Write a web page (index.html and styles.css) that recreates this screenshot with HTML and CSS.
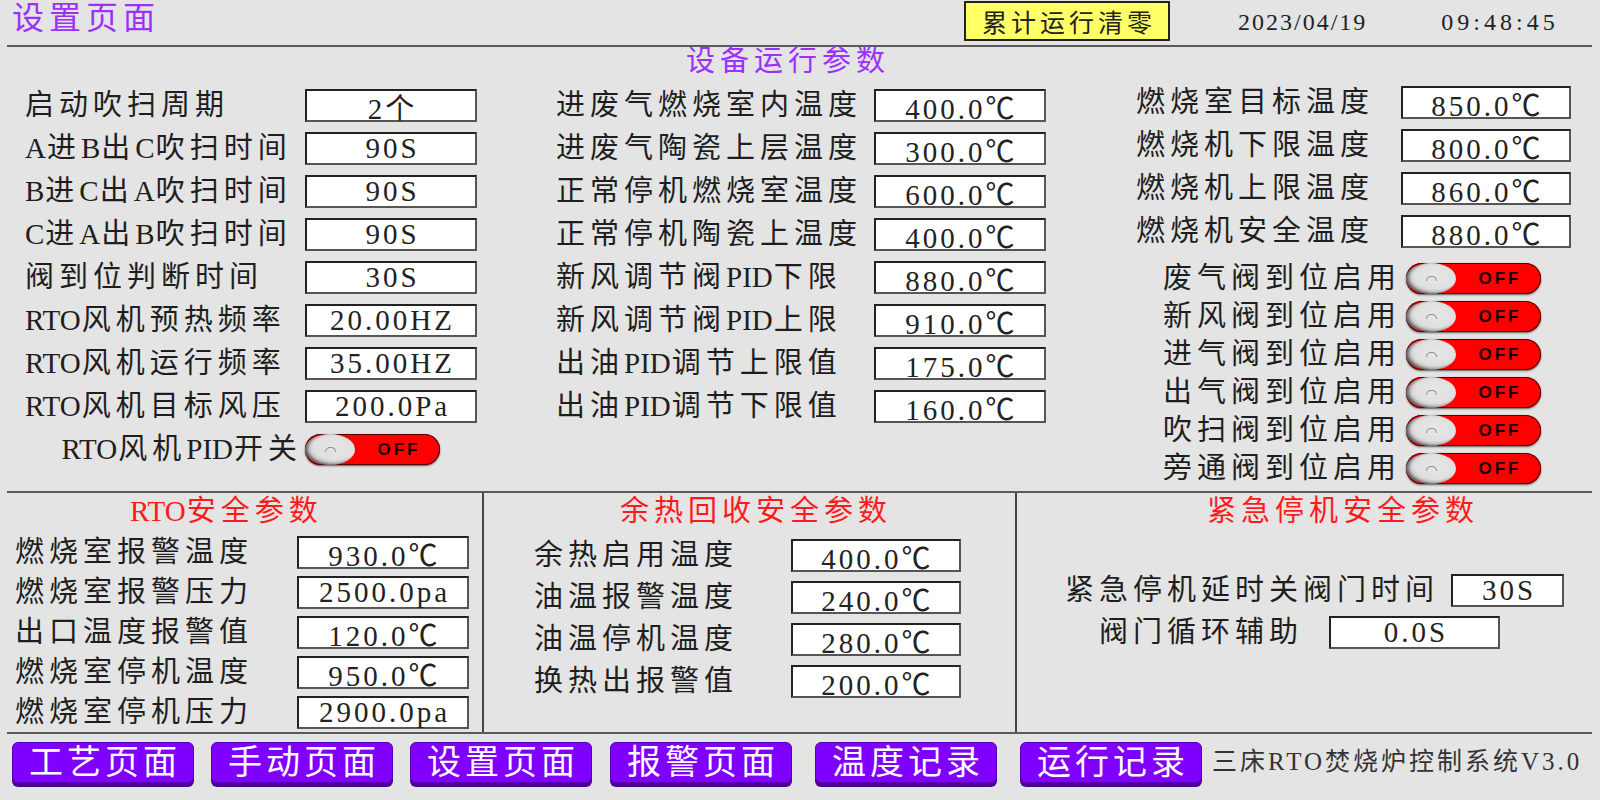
FILE: index.html
```html
<!DOCTYPE html>
<html lang="zh-CN">
<head>
    <meta charset="UTF-8">
    <meta name="viewport" content="width=device-width, initial-scale=1.0">
    <title>设置页面</title>
    <link rel="stylesheet" href="styles.css">
</head>
<body>
<div class="screen">
    <header class="top">
        <h1 class="title">设置页面</h1>
        <button class="clear-btn">累计运行清零</button>
        <span class="date">2023/04/19</span>
        <span class="time">09:48:45</span>
    </header>

    <section class="device">
        <h2 class="device-title">设备运行参数</h2>
        <div class="device-cols">
            <div class="col col-left">
                <div class="row"><span class="label">启动吹扫周期</span><span class="val">2个</span></div>
                <div class="row"><span class="label"><span class="en">A</span>进<span class="en">B</span>出<span class="en">C</span>吹扫时间</span><span class="val">90S</span></div>
                <div class="row"><span class="label"><span class="en">B</span>进<span class="en">C</span>出<span class="en">A</span>吹扫时间</span><span class="val">90S</span></div>
                <div class="row"><span class="label"><span class="en">C</span>进<span class="en">A</span>出<span class="en">B</span>吹扫时间</span><span class="val">90S</span></div>
                <div class="row"><span class="label">阀到位判断时间</span><span class="val">30S</span></div>
                <div class="row"><span class="label"><span class="en">RTO</span>风机预热频率</span><span class="val">20.00HZ</span></div>
                <div class="row"><span class="label"><span class="en">RTO</span>风机运行频率</span><span class="val">35.00HZ</span></div>
                <div class="row"><span class="label"><span class="en">RTO</span>风机目标风压</span><span class="val">200.0Pa</span></div>
                <div class="row sw-row">
                    <span class="label"><span class="en">RTO</span>风机<span class="en">PID</span>开关</span>
                    <div class="switch"><span class="knob"><i></i></span><span class="off">OFF</span></div>
                </div>
            </div>

            <div class="col col-mid">
                <div class="row"><span class="label">进废气燃烧室内温度</span><span class="val">400.0℃</span></div>
                <div class="row"><span class="label">进废气陶瓷上层温度</span><span class="val">300.0℃</span></div>
                <div class="row"><span class="label">正常停机燃烧室温度</span><span class="val">600.0℃</span></div>
                <div class="row"><span class="label">正常停机陶瓷上温度</span><span class="val">400.0℃</span></div>
                <div class="row"><span class="label">新风调节阀<span class="en">PID</span>下限</span><span class="val">880.0℃</span></div>
                <div class="row"><span class="label">新风调节阀<span class="en">PID</span>上限</span><span class="val">910.0℃</span></div>
                <div class="row"><span class="label">出油<span class="en">PID</span>调节上限值</span><span class="val">175.0℃</span></div>
                <div class="row"><span class="label">出油<span class="en">PID</span>调节下限值</span><span class="val">160.0℃</span></div>
            </div>

            <div class="col col-right">
                <div class="row"><span class="label">燃烧室目标温度</span><span class="val">850.0℃</span></div>
                <div class="row"><span class="label">燃烧机下限温度</span><span class="val">800.0℃</span></div>
                <div class="row"><span class="label">燃烧机上限温度</span><span class="val">860.0℃</span></div>
                <div class="row"><span class="label">燃烧机安全温度</span><span class="val">880.0℃</span></div>
                <div class="sw-list">
                    <div class="sw-item"><span class="label">废气阀到位启用</span><div class="switch"><span class="knob"><i></i></span><span class="off">OFF</span></div></div>
                    <div class="sw-item"><span class="label">新风阀到位启用</span><div class="switch"><span class="knob"><i></i></span><span class="off">OFF</span></div></div>
                    <div class="sw-item"><span class="label">进气阀到位启用</span><div class="switch"><span class="knob"><i></i></span><span class="off">OFF</span></div></div>
                    <div class="sw-item"><span class="label">出气阀到位启用</span><div class="switch"><span class="knob"><i></i></span><span class="off">OFF</span></div></div>
                    <div class="sw-item"><span class="label">吹扫阀到位启用</span><div class="switch"><span class="knob"><i></i></span><span class="off">OFF</span></div></div>
                    <div class="sw-item"><span class="label">旁通阀到位启用</span><div class="switch"><span class="knob"><i></i></span><span class="off">OFF</span></div></div>
                </div>
            </div>
        </div>
    </section>

    <section class="safety">
        <div class="safe safe-rto">
            <h3 class="safe-title"><span class="en">RTO</span>安全参数</h3>
            <div class="row"><span class="label">燃烧室报警温度</span><span class="val">930.0℃</span></div>
            <div class="row"><span class="label">燃烧室报警压力</span><span class="val">2500.0pa</span></div>
            <div class="row"><span class="label">出口温度报警值</span><span class="val">120.0℃</span></div>
            <div class="row"><span class="label">燃烧室停机温度</span><span class="val">950.0℃</span></div>
            <div class="row"><span class="label">燃烧室停机压力</span><span class="val">2900.0pa</span></div>
        </div>
        <div class="safe safe-heat">
            <h3 class="safe-title">余热回收安全参数</h3>
            <div class="row"><span class="label">余热启用温度</span><span class="val">400.0℃</span></div>
            <div class="row"><span class="label">油温报警温度</span><span class="val">240.0℃</span></div>
            <div class="row"><span class="label">油温停机温度</span><span class="val">280.0℃</span></div>
            <div class="row"><span class="label">换热出报警值</span><span class="val">200.0℃</span></div>
        </div>
        <div class="safe safe-stop">
            <h3 class="safe-title">紧急停机安全参数</h3>
            <div class="row stop-1"><span class="label">紧急停机延时关阀门时间</span><span class="val">30S</span></div>
            <div class="row stop-2"><span class="label">阀门循环辅助</span><span class="val">0.0S</span></div>
        </div>
    </section>

    <nav class="nav">
        <button class="nav-btn">工艺页面</button>
        <button class="nav-btn">手动页面</button>
        <button class="nav-btn">设置页面</button>
        <button class="nav-btn">报警页面</button>
        <button class="nav-btn">温度记录</button>
        <button class="nav-btn">运行记录</button>
        <span class="brand">三床RTO焚烧炉控制系统V3.0</span>
    </nav>
</div>
</body>
</html>
```

FILE: styles.css
```css
*{
    margin: 0;
    padding: 0;
    box-sizing: border-box;
}

body{
    width: 1600px;
    height: 800px;
    overflow: hidden;
    background-color: #e4e4e4;
    color: #1e1e1e;
    font-family: "Liberation Serif", "Noto Sans CJK SC", serif;
}

.screen{
    width: 1585px;
    margin-left: 7px;
}

/* latin letters sit tight, like the half-width HMI font */
.en{
    letter-spacing: 0;
    margin-right: 1px;
}

/* top bar */
.top{
    height: 47px;
    display: flex;
    align-items: flex-start;
    border-bottom: 2px solid #5a5a5a;
}

.title{
    margin-left: 5px;
    width: 148px;
    font-size: 32px;
    font-weight: normal;
    line-height: 37px;
    letter-spacing: 5px;
    white-space: nowrap;
    color: #9b30ff;
}

.clear-btn{
    margin-left: 804px;
    margin-top: 1px;
    width: 206px;
    height: 40px;
    background-color: #ffff66;
    border: 2px solid #222;
    font-family: inherit;
    font-size: 25px;
    letter-spacing: 4px;
    text-indent: 4px;
    color: #222;
}

.date{
    margin-left: 68px;
    font-size: 24px;
    line-height: 45px;
    letter-spacing: 2px;
    color: #222;
}

.time{
    margin-left: 74px;
    font-size: 24px;
    line-height: 45px;
    letter-spacing: 4px;
    color: #222;
}

/* shared rows */
.row{
    display: flex;
    align-items: center;
    height: 33px;
    margin-bottom: 10px;
}

.label{
    flex: none;
    font-size: 29px;
    letter-spacing: 5px;
    white-space: nowrap;
    line-height: 33px;
}

.val{
    flex: none;
    height: 33px;
    width: 172px;
    display: flex;
    align-items: center;
    justify-content: center;
    background-color: #fff;
    border: 2px solid #3c3c3c;
    border-color: #222 #555 #555 #222;
    font-size: 29px;
    letter-spacing: 3px;
    text-indent: 3px;
    white-space: nowrap;
    color: #222;
}

/* device parameters */
.device{
    height: 447px;
    border-bottom: 2px solid #5a5a5a;
}

.device-title{
    padding-left: 679px;
    height: 30px;
    margin-top: -1px;
    font-size: 29px;
    font-weight: normal;
    line-height: 30px;
    letter-spacing: 5px;
    color: #9b30ff;
}

.device-cols{
    display: flex;
    margin-top: 13px;
}

.col-left{
    width: 549px;
    padding-left: 18px;
}

.col-left .label{
    width: 280px;
}

.col-left .sw-row .label{
    text-align: right;
    padding-right: 3px;
}

.col-mid{
    width: 580px;
}

.col-mid .label{
    width: 318px;
}

.col-right{
    margin-top: -3px;
}

.col-right .label{
    width: 265px;
}

.col-right .val{
    width: 170px;
}

.sw-list{
    margin-top: 14px;
}

.sw-item{
    display: flex;
    align-items: center;
    height: 33px;
    margin-bottom: 5px;
}

.sw-item .label{
    width: 270px;
    padding-left: 27px;
}

/* toggle switch */
.switch{
    width: 135px;
    height: 31px;
    display: flex;
    align-items: center;
    border-radius: 16px;
    background-color: #ff0000;
    box-shadow: inset 0 0 0 1px #5a0000, 0 1px 2px rgba(0, 0, 0, 0.6);
}

.knob{
    width: 50px;
    height: 31px;
    display: flex;
    align-items: center;
    justify-content: center;
    border-radius: 50%;
    background: radial-gradient(ellipse at 60% 42%, #e6e6e6 0, #e0e0e0 50%, #c8c8c8 66%, #858585 84%, #3a3a3a 100%);
    box-shadow: inset 3px -1px 3px rgba(0, 0, 0, 0.45);
}

.knob i{
    width: 11px;
    height: 5px;
    border: 1px solid #8a8a8a;
    border-bottom: none;
    border-radius: 6px 6px 0 0;
}

.off{
    flex: 1;
    text-align: center;
    font-family: "Liberation Sans", sans-serif;
    font-weight: bold;
    font-size: 17px;
    letter-spacing: 3px;
    text-indent: 3px;
    color: #1a0000;
}

/* safety parameters */
.safety{
    height: 241px;
    display: flex;
    border-bottom: 2px solid #5a5a5a;
}

.safe{
    border-right: 2px solid #444;
}

.safe-title{
    height: 30px;
    margin-top: 3px;
    margin-bottom: 10px;
    font-size: 29px;
    font-weight: normal;
    line-height: 30px;
    letter-spacing: 5px;
    white-space: nowrap;
    color: #ff1a1a;
}

.safe-rto{
    width: 477px;
}

.safe-rto .safe-title{
    padding-left: 123px;
}

.safe-rto .row{
    margin-bottom: 7px;
}

.safe-rto .label{
    width: 290px;
    padding-left: 8px;
}

.safe-heat{
    width: 533px;
}

.safe-heat .safe-title{
    padding-left: 136px;
    margin-bottom: 13px;
}

.safe-heat .row{
    margin-bottom: 9px;
}

.safe-heat .label{
    width: 307px;
    padding-left: 50px;
}

.safe-heat .val{
    width: 170px;
}

.safe-stop{
    flex: 1;
    border-right: none;
}

.safe-stop .safe-title{
    padding-left: 190px;
    margin-bottom: 48px;
}

.safe-stop .label{
    text-align: right;
}

.stop-1{
    margin-bottom: 9px;
}

.stop-1 .label{
    width: 434px;
    padding-right: 12px;
}

.stop-1 .val{
    width: 113px;
}

.stop-2 .label{
    width: 312px;
    padding-right: 26px;
}

.stop-2 .val{
    width: 171px;
}

/* bottom navigation */
.nav{
    display: flex;
    align-items: flex-start;
    height: 65px;
    padding-top: 8px;
    padding-left: 5px;
}

.nav-btn{
    width: 182px;
    height: 41px;
    margin-right: 17px;
    background-color: #8000ff;
    border: 1px solid #5a00b4;
    border-radius: 6px;
    box-shadow: 0 4px 0 #4a0090;
    font-family: inherit;
    font-size: 34px;
    letter-spacing: 4px;
    text-indent: 4px;
    line-height: 38px;
    white-space: nowrap;
    color: #fff;
}

.nav-btn:nth-child(3){
    margin-right: 18px;
}

.nav-btn:nth-child(4),
.nav-btn:nth-child(5){
    margin-right: 23px;
}

.nav-btn:nth-child(6){
    margin-right: 10px;
}

.brand{
    margin-top: 4px;
    font-size: 25px;
    line-height: 32px;
    letter-spacing: 3px;
    white-space: nowrap;
    color: #333;
}
```
